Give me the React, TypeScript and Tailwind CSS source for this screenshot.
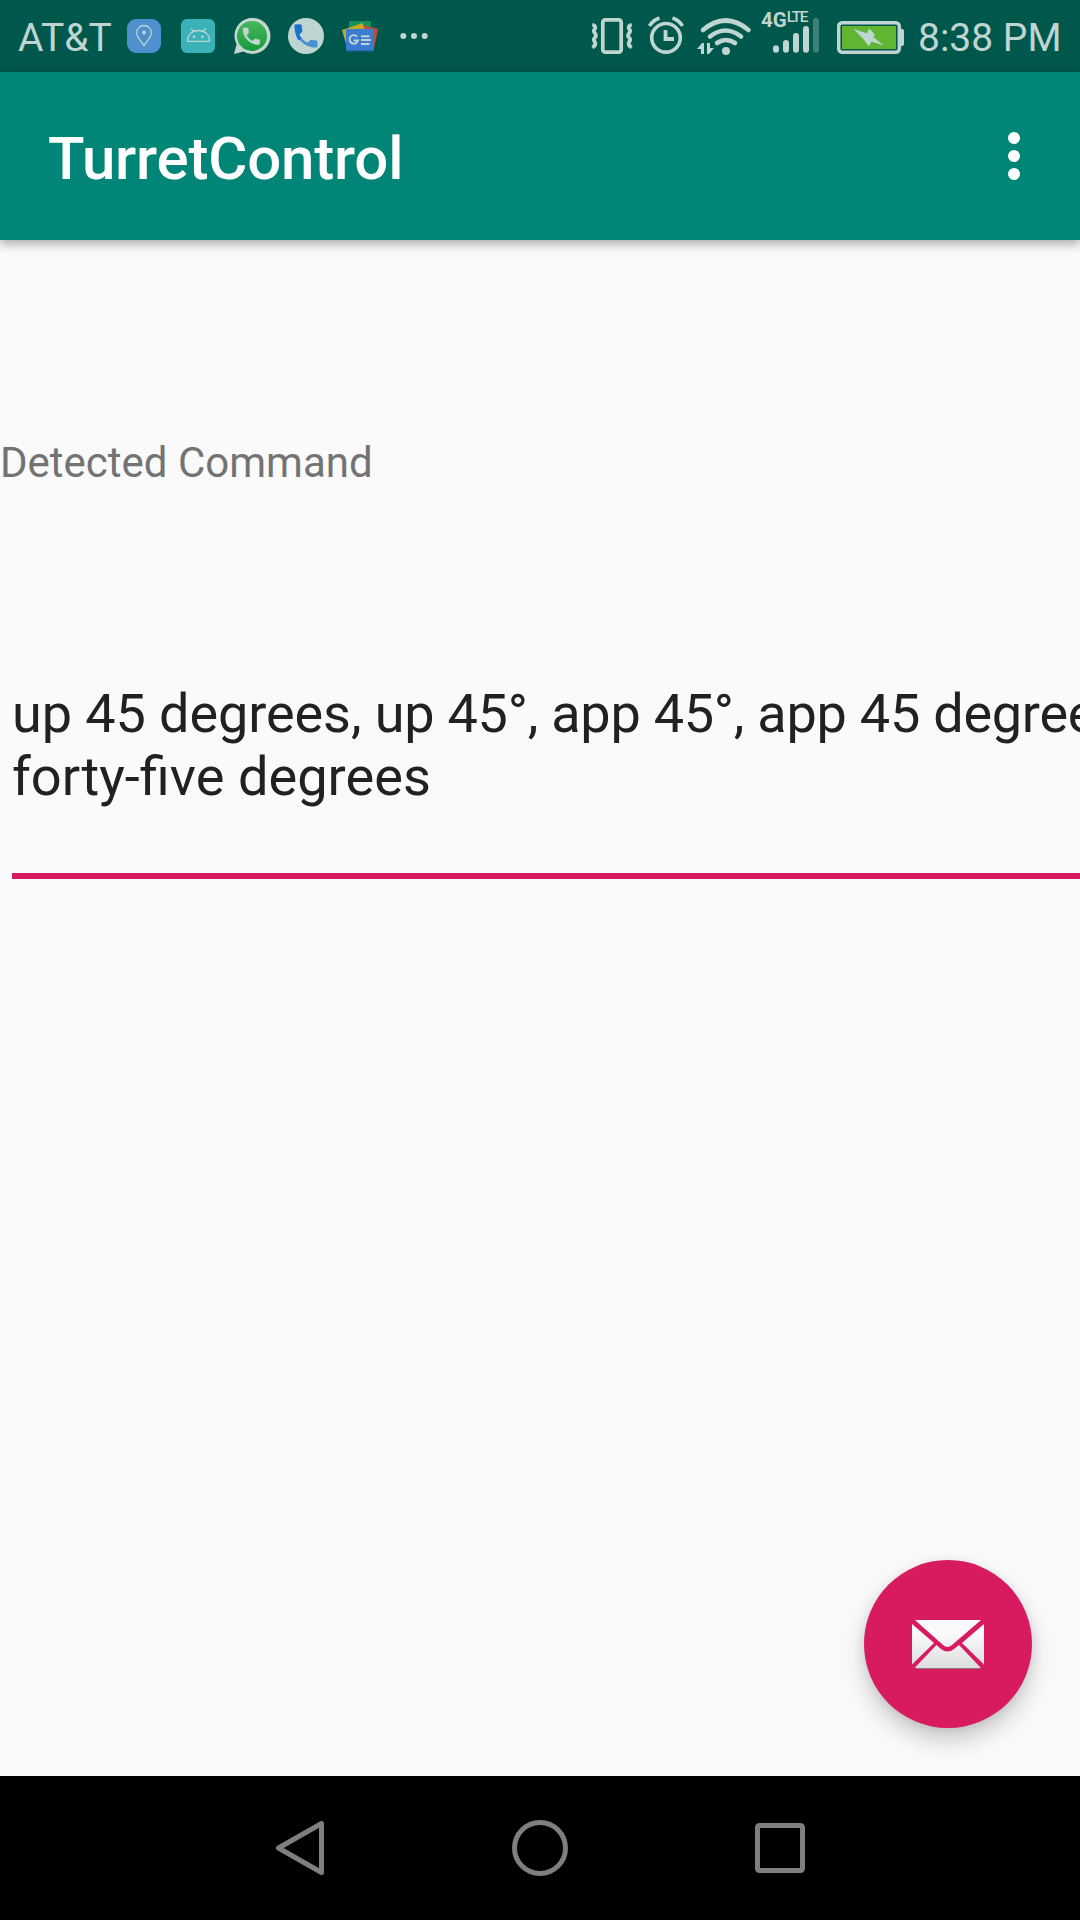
import React from "react";

const Icon = ({ x, y = 0, w, h, className = "", children }: any) => (
  <svg width={w} height={h} viewBox={`${x} ${y} ${w} ${h}`} fill="none" className={`block shrink-0 ${className}`}>
    {children}
  </svg>
);

const HANDSET =
  "M6.62 10.79c1.44 2.83 3.76 5.14 6.59 6.59l2.2-2.2c.27-.27.67-.36 1.02-.24 1.12.37 2.33.57 3.57.57.55 0 1 .45 1 1V20c0 .55-.45 1-1 1-9.39 0-17-7.61-17-17 0-.55.45-1 1-1h3.5c.55 0 1 .45 1 1 0 1.25.2 2.45.57 3.57.11.35.03.74-.25 1.02l-2.2 2.2z";

function StatusBar() {
  return (
    <header className="flex h-[72px] shrink-0 items-center bg-[#00574b] text-[#bfd5d2]">
      <span className="ml-[18px] w-[109px] whitespace-nowrap pt-[3px] text-[39px] leading-[72px]">AT&amp;T</span>

      <Icon x={127} w={34} h={72}>
        <rect x="127" y="19" width="34" height="34" rx="9" fill="#4d90cd" />
        <path d="M144 45.5C141 41 136.700 37.500 136.700 32.800a7.300 7.300 0 0 1 14.600 0C151.300 37.500 147 41 144 45.500Z" stroke="#bfd5d2" strokeWidth="1.300" />
        <circle cx="144" cy="32.500" r="1.900" fill="#bfd5d2" />
      </Icon>

      <Icon x={181} w={34} h={72} className="ml-5">
        <rect x="181" y="19" width="34" height="34" rx="6" fill="#3bb2b8" />
        <path d="M187.500 41.300C187.500 34.500 192 30.500 198.500 30.500S209.500 34.500 209.500 41.300ZM193.500 31.500l-2.200-3.200M203.500 31.500l2.200-3.200" stroke="#bfd5d2" strokeWidth="1.300" strokeLinejoin="round" />
        <circle cx="194" cy="36.700" r="1.300" fill="#bfd5d2" />
        <circle cx="202.500" cy="36.700" r="1.300" fill="#bfd5d2" />
      </Icon>

      <Icon x={233} w={38} h={72} className="ml-[18px]">
        <defs>
          <linearGradient id="wa" x1="0" y1="0" x2="0" y2="1">
            <stop offset="0" stopColor="#49b75c" />
            <stop offset="1" stopColor="#159a3a" />
          </linearGradient>
        </defs>
        <path d="M234 54l2.600-9.600A18 18 0 1 1 243.500 51.500Z" fill="#c3d6d2" />
        <circle cx="252" cy="36" r="15" fill="url(#wa)" />
        <path transform="translate(240.300 25.200) scale(.92)" d={HANDSET} fill="#c3d6d2" stroke="#c3d6d2" strokeWidth=".7" />
      </Icon>

      <Icon x={288} w={36} h={72} className="ml-[17px]">
        <circle cx="306" cy="36" r="18" fill="#bfd5d2" />
        <g transform="translate(290.800 20.800) scale(1.270)">
          <path d={HANDSET} fill="#4a8fd0" />
          <path d="M4 3h3.500c.55 0 1 .45 1 1 0 1.250.2 2.450.57 3.570.110.350.030.740-.250 1.020l-2.200 2.200c.5 1.100 1.100 2 1.900 2.900l-2.500 1.900C4.200 12.500 3 8.500 3 4c0-.55.45-1 1-1z" fill="#1673d2" />
        </g>
      </Icon>

      <Icon x={341} w={38} h={72} className="ml-[17px]">
        <path d="M349 21h22v10h-22z" fill="#12925a" />
        <path d="M363 25l15 4-4 20-13-4z" fill="#bd4b40" />
        <path d="M342 30l20.500-7 4 12-19 14z" fill="#c5a928" />
        <path d="M346 29h28v22h-28z" fill="#3b7bd0" />
        <path d="M346 50.300h28v1.200h-28z" fill="#2860a4" />
        <path d="M357.200 36.700a4.300 4.300 0 1 0 .800 3.800h-4.300" stroke="#bfd5d2" strokeWidth="1.900" />
        <path d="M361 36.200h8.500M361 40h10M361 43.900h8.500" stroke="#bfd5d2" strokeWidth="2" />
      </Icon>

      <Icon x={400} w={28} h={72} className="ml-[21px]">
        <g fill="#bfd5d2">
          <circle cx="403.300" cy="36" r="3" />
          <circle cx="414" cy="36" r="3" />
          <circle cx="424.700" cy="36" r="3" />
        </g>
      </Icon>

      <Icon x={591} w={42} h={72} className="ml-[163px]">
        <rect x="602.800" y="19.800" width="18.400" height="32.400" rx="2.500" stroke="#bfd5d2" strokeWidth="3.700" />
        <path
          d="M592.300 24.500q4 1.500 2.600 4.300q-2 2.200 0 4.400q2 2.200 0 4.400q-2 2.200 0 4.400q1.400 3-2.600 5.500M631.700 24.500q-4 1.500-2.600 4.300q2 2.200 0 4.400q-2 2.200 0 4.400q2 2.200 0 4.400q-1.400 3 2.600 5.500"
          stroke="#bfd5d2"
          strokeWidth="3.800"
        />
      </Icon>

      <Icon x={648} w={36} h={72} className="ml-[15px]">
        <g stroke="#bfd5d2" strokeWidth="3.600">
          <circle cx="666" cy="37.800" r="14.300" />
          <path d="M665.500 30v9h8.500" strokeWidth="3.800" />
          <path d="M649.500 26q3-5.500 10-8M682.500 26q-3-5.500-10-8" />
        </g>
      </Icon>

      <Icon x={697} w={56} h={72} className="ml-[13px]">
        <g stroke="#bfd5d2" strokeWidth="4.600" strokeLinecap="round">
          <path d="M703 30q22.500-19 45.500 0M710 36.500q15.500-12 31 0M717 43q9-6 18 0" />
        </g>
        <circle cx="726" cy="51" r="4" fill="#bfd5d2" />
        <path d="M697 49l5-6h2v11h-3v-5zM707 43h3v5h4l-5 6h-2z" fill="#bfd5d2" />
      </Icon>

      <div className="relative ml-[7px] h-[72px] w-[60px] shrink-0">
        <svg width="60" height="72" viewBox="760 0 60 72" className="block">
          <g stroke="#bfd5d2" strokeWidth="6" strokeLinecap="round">
            <path d="M776 48.200v1.600M786 43v6.800M796 36v13.800M806 29v20.800" />
            <path d="M816 21v28.800" stroke="#3d8076" />
          </g>
        </svg>
        <span className="absolute left-[1px] top-[10px] flex text-[20.5px] font-bold leading-[20px]">
          4G<span className="text-[15.5px] font-medium leading-[15px] tracking-[-1.5px]">LTE</span>
        </span>
      </div>

      <Icon x={837} w={67} h={72} className="ml-[17px]">
        <rect x="838.700" y="22.700" width="60.600" height="29.600" rx="3.500" stroke="#bfd5d2" strokeWidth="3.500" />
        <path d="M842 26h54v23h-54z" fill="#60b632" />
        <path d="M901 29h1q2 0 2 2v13q0 2-2 2h-1z" fill="#bfd5d2" />
        <path d="M853.500 29L866.700 33.200 869.300 28.500 875 34.700 873.300 37 884 45.800 871.700 41.500 868.700 46.200 863.300 39z" fill="#bfd5d2" />
      </Icon>

      <span className="ml-[14px] whitespace-nowrap pt-[3px] text-[39px] leading-[72px]">8:38 PM</span>
    </header>
  );
}

function AppBar() {
  return (
    <div className="z-10 flex h-[168px] shrink-0 items-center justify-between bg-[#008577] pl-12 pr-[60px] shadow-[0_4px_10px_rgba(0,0,0,0.32)]">
      <h1 className="pt-[5px] text-[60px] font-medium leading-[70px] tracking-[-0.2px] text-white">TurretControl</h1>
      <button aria-label="More options" className="flex flex-col gap-1.5">
        <i className="size-3 rounded-full bg-white" />
        <i className="size-3 rounded-full bg-white" />
        <i className="size-3 rounded-full bg-white" />
      </button>
    </div>
  );
}

export default function App() {
  return (
    <div className="relative flex h-[1920px] w-[1080px] flex-col overflow-hidden bg-[#fafafa] font-['Roboto',sans-serif]">
      <StatusBar />
      <AppBar />
      <main className="flex-1 overflow-hidden pt-[198px]">
        <p className="text-[42px] leading-[49px] text-[#737373]">Detected Command</p>
        <div className="ml-3 mt-[195px] w-[1200px] border-b-[6px] border-[#d81b60] pb-[65px] text-[54px] leading-[63px] text-[#212121]">
          <p className="whitespace-nowrap tracking-[-0.24px]">
            <span className="tracking-[-0.08px]">up 45 degrees, </span>up 45°, app 45°, app 45 degrees,
          </p>
          <p className="text-[54.2px]">forty-five degrees</p>
        </div>
      </main>
      <button
        aria-label="Send"
        className="absolute bottom-48 right-12 flex size-[168px] items-center justify-center rounded-full bg-[#d81b60] shadow-[0_12px_24px_rgba(0,0,0,0.2),0_2px_8px_rgba(0,0,0,0.08)]"
      >
        <Icon x={912} y={1619} w={72} h={50}>
          <defs>
            <linearGradient id="mail" gradientUnits="userSpaceOnUse" x1="0" y1="1619" x2="0" y2="1669">
              <stop offset=".3" stopColor="#fafafa" />
              <stop offset="1" stopColor="#dcdcdc" />
            </linearGradient>
          </defs>
          <g fill="url(#mail)">
            <path d="M915 1620h66l-29 25q-4.500 4-9 0z" />
            <path d="M912 1624l22 19-22 21.500z" />
            <path d="M984 1624l-22 19 22 21.500z" />
            <path d="M936.500 1645l4.500 4q6.500 5 13 0l5-4 21.500 22.500-1.500 1h-62l-2-1z" />
          </g>
          <path d="M916 1668.500h64" stroke="#8e7880" strokeWidth="1" />
        </Icon>
      </button>
      <nav className="flex h-36 shrink-0 items-center bg-black">
        <Icon x={274} y={1776} w={52} h={144} className="ml-[274px]">
          <path d="M321.500 1823.500v49L278.500 1848Z" stroke="#7f7f7f" strokeWidth="5" strokeLinejoin="round" />
        </Icon>
        <Icon x={512} y={1776} w={56} h={144} className="ml-[186px]">
          <circle cx="540" cy="1848" r="25.500" stroke="#7f7f7f" strokeWidth="5" />
        </Icon>
        <Icon x={755} y={1776} w={50} h={144} className="ml-[187px]">
          <rect x="757.500" y="1825.500" width="45" height="45" rx="2" stroke="#7f7f7f" strokeWidth="5" />
        </Icon>
      </nav>
    </div>
  );
}
